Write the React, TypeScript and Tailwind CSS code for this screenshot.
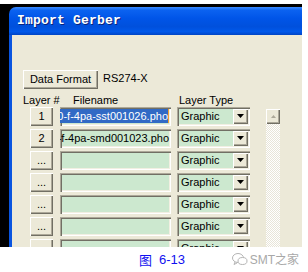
import React from 'react';

const raised =
  'bg-[#ece9d8] shadow-[inset_1px_1px_0_#ffffff,inset_-1px_-1px_0_#716f64,inset_-2px_-2px_0_#aca899]';
const sunken =
  'shadow-[inset_1px_1px_0_#aca899,inset_2px_2px_0_#716f64,inset_-1px_-1px_0_#ffffff,inset_-2px_-2px_0_#f1efe2]';

const rows = [
  { id: '1', file: '20-f-4pa-sst001026.pho', selected: true },
  { id: '2', file: '20-f-4pa-smd001023.pho' },
  { id: '...' },
  { id: '...' },
  { id: '...' },
  { id: '...' },
  { id: '...' },
];

function LayerRow({ id, file, selected }: { id: string; file?: string; selected?: boolean }) {
  return (
    <div className="flex items-center h-[20px]">
      {/* layer number button */}
      <div className={`ml-[7px] w-[23px] h-[19px] flex items-center justify-center ${raised}`}>
        <span className="leading-none">{id}</span>
      </div>

      {/* filename field */}
      <div className={`ml-[7px] w-[111px] h-[19px] bg-[#cce8cf] ${sunken} flex items-center justify-end overflow-hidden pl-[2px] pr-[2px]`}>
        {file && (
          <span
            className={`whitespace-nowrap leading-[14px] ${selected ? 'bg-[#316ac5] text-white border-r border-[#f0a030]' : ''}`}
          >
            {file}
          </span>
        )}
      </div>

      {/* layer type select */}
      <div className={`ml-[6px] w-[73px] h-[19px] bg-[#cce8cf] ${sunken} flex items-center pl-[4px] pr-[2px]`}>
        <span className="flex-1 leading-none">Graphic</span>
        <div className={`w-[15px] h-[15px] flex items-center justify-center ${raised}`}>
          <svg width="7" height="4" viewBox="0 0 7 4">
            <path d="M0 0h7L3.5 4z" fill="#000" />
          </svg>
        </div>
      </div>
    </div>
  );
}

export default function App() {
  return (
    <div className="w-[308px] h-[272px] bg-white overflow-hidden flex flex-col font-['Liberation_Sans',Arial,sans-serif] text-[11px] text-black">
      {/* window, sitting on a dark backdrop */}
      <div className="mt-[4px] w-[302px] h-[243px] bg-black pl-[9px] pt-[3px] flex flex-col">
        <div className="flex-1 flex flex-col rounded-tl-[7px] overflow-hidden">
          {/* title bar */}
          <div className="h-[28px] flex items-center pl-[8px] bg-[linear-gradient(to_bottom,#3c8cff_0%,#0b62f0_12%,#0055e8_40%,#0050dc_70%,#0058ea_88%,#0044c4_100%)]">
            <span className="font-['Liberation_Mono',monospace] font-bold text-[13px] text-white tracking-[0.2px] [text-shadow:1px_1px_0_#0a237a]">
              Import Gerber
            </span>
          </div>

          {/* body */}
          <div className="flex-1 flex border-l-[3px] border-[#0a55e0] bg-[#ece9d8] overflow-hidden">
            <div className="flex flex-col pl-[11px] pt-[35px]">
              <div className="flex items-center">
                <div className={`w-[75px] h-[19px] flex items-center justify-center ${raised}`}>
                  Data Format
                </div>
                <span className="ml-[5px] -mt-[3px]">RS274-X</span>
              </div>

              <div className="flex mt-[4px] h-[14px] items-center">
                <span className="w-[50px]">Layer #</span>
                <span className="w-[106px]">Filename</span>
                <span>Layer Type</span>
              </div>

              <div className="flex">
                <div className="flex flex-col gap-[2px] -mt-[1px]">
                  {rows.map((r, i) => (
                    <LayerRow key={i} {...r} />
                  ))}
                </div>

                {/* scrollbar */}
                <div className="ml-[16px] mt-[2px] w-[14px] flex flex-col">
                  <div className={`w-[14px] h-[15px] flex items-center justify-center ${raised}`}>
                    <svg width="5" height="3" viewBox="0 0 5 3">
                      <path d="M2.5 0L5 3H0z" fill="#aca899" />
                    </svg>
                  </div>
                  <div className="flex-1 h-[200px] bg-[repeating-conic-gradient(#ffffff_0_25%,#e8e5d8_0_50%)] bg-[length:2px_2px]" />
                </div>
              </div>
            </div>
          </div>
        </div>
      </div>

      {/* caption */}
      <div className="flex-1 flex items-center">
        <span className="ml-[139px] text-[13px] text-[#1010f0] font-['Noto_Sans_CJK_SC',sans-serif] leading-none">
          图
        </span>
        <span className="ml-[7px] text-[13px] text-[#1010f0] leading-none">6-13</span>

        <div className="ml-auto mr-[9px] flex items-center gap-[2px] text-[#a8a8a8]">
          <svg width="16" height="13" viewBox="0 0 16 13" fill="none" stroke="#b4b4b4" strokeWidth="1">
            <ellipse cx="6" cy="5" rx="5.5" ry="4.5" />
            <path d="M3 9l-1 2.5 3-1.5" />
            <ellipse cx="10.5" cy="8" rx="4.5" ry="3.5" fill="#fff" />
          </svg>
          <span className="text-[12px] font-['Liberation_Sans','Noto_Sans_CJK_SC',sans-serif] leading-none">
            SMT之家
          </span>
        </div>
      </div>
    </div>
  );
}
